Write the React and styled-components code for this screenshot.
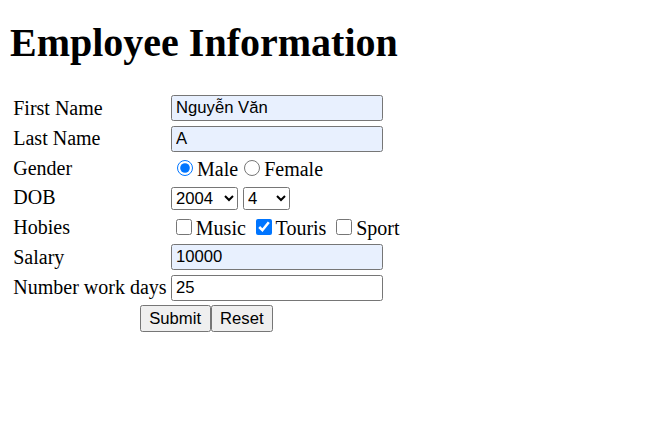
import React from "react";
import styled, { createGlobalStyle } from "styled-components";

const Global = createGlobalStyle`
  html, body { background: #fff; }
  body {
    margin: 10px;
    font-family: "Liberation Serif", "Times New Roman", serif;
    font-size: 20px;
    color: #000;
  }
`;

const Title = styled.h1`
  font-family: "Liberation Serif", "Times New Roman", serif;
  font-size: 40px;
  font-weight: bold;
  margin: 9px 0 26px;
`;

const Table = styled.table`
  border-collapse: separate;
  border-spacing: 2.5px;
  font-size: 20px;
`;

const Cell = styled.td`
  padding: 1.25px;
  white-space: nowrap;
  vertical-align: middle;
  text-align: ${(p) => (p.$center ? "center" : "left")};
`;

const TextInput = styled.input`
  box-sizing: border-box;
  width: 212px;
  height: 26px;
  margin: 0;
  padding: 1px 4px;
  border: 1px solid #767676;
  border-radius: 2.5px;
  font-family: "Liberation Sans", Arial, sans-serif;
  font-size: 16.67px;
  color: #000;
  background: ${(p) => (p.$filled ? "#e8f0fe" : "#fff")};
  outline: none;
`;

const Radio = styled.input.attrs({ type: "radio" })`
  width: 16px;
  height: 16px;
  margin: 3.75px 3.75px 0 6.25px;
  accent-color: #0075ff;
  vertical-align: baseline;
`;

const Check = styled.input.attrs({ type: "checkbox" })`
  width: 16px;
  height: 16px;
  margin: 3.75px 3.75px 3.75px 5px;
  accent-color: #0075ff;
  vertical-align: baseline;
`;

const Select = styled.select`
  box-sizing: border-box;
  width: ${(p) => p.$w}px;
  height: 23px;
  margin: 0;
  border: 1px solid #767676;
  border-radius: 2.5px;
  background: #fff;
  color: #000;
  font-family: "Liberation Sans", Arial, sans-serif;
  font-size: 16.67px;
  vertical-align: middle;
`;

const Button = styled.button`
  box-sizing: border-box;
  height: 26.5px;
  margin: 0;
  padding: 2.75px 8.5px;
  border: 1px solid #767676;
  border-radius: 2.5px;
  background: #efefef;
  color: #000;
  font-family: "Liberation Sans", Arial, sans-serif;
  font-size: 16.67px;
  line-height: normal;
`;

const years = ["2004"];
const days = ["4"];

export default function App() {
  return (
    <>
      <Global />
      <Title>Employee Information</Title>
      <form onSubmit={(e) => e.preventDefault()}>
        <Table>
          <tbody>
            <tr>
              <Cell>First Name</Cell>
              <Cell>
                <TextInput $filled defaultValue="Nguyễn Văn" />
              </Cell>
            </tr>
            <tr>
              <Cell>Last Name</Cell>
              <Cell>
                <TextInput $filled defaultValue="A" />
              </Cell>
            </tr>
            <tr>
              <Cell>Gender</Cell>
              <Cell>
                <Radio name="gender" defaultChecked />Male<Radio name="gender" />Female
              </Cell>
            </tr>
            <tr>
              <Cell>DOB</Cell>
              <Cell>
                <Select $w={67} defaultValue="2004">
                  {years.map((y) => (
                    <option key={y}>{y}</option>
                  ))}
                </Select>{" "}
                <Select $w={47} defaultValue="4">
                  {days.map((d) => (
                    <option key={d}>{d}</option>
                  ))}
                </Select>
              </Cell>
            </tr>
            <tr>
              <Cell>Hobies</Cell>
              <Cell>
                <Check />Music <Check defaultChecked />Touris <Check />Sport
              </Cell>
            </tr>
            <tr>
              <Cell>Salary</Cell>
              <Cell>
                <TextInput $filled defaultValue="10000" />
              </Cell>
            </tr>
            <tr>
              <Cell>Number work days</Cell>
              <Cell>
                <TextInput defaultValue="25" />
              </Cell>
            </tr>
            <tr>
              <Cell colSpan={2} $center>
                <Button type="submit">Submit</Button>
                <Button type="reset">Reset</Button>
              </Cell>
            </tr>
          </tbody>
        </Table>
      </form>
    </>
  );
}
